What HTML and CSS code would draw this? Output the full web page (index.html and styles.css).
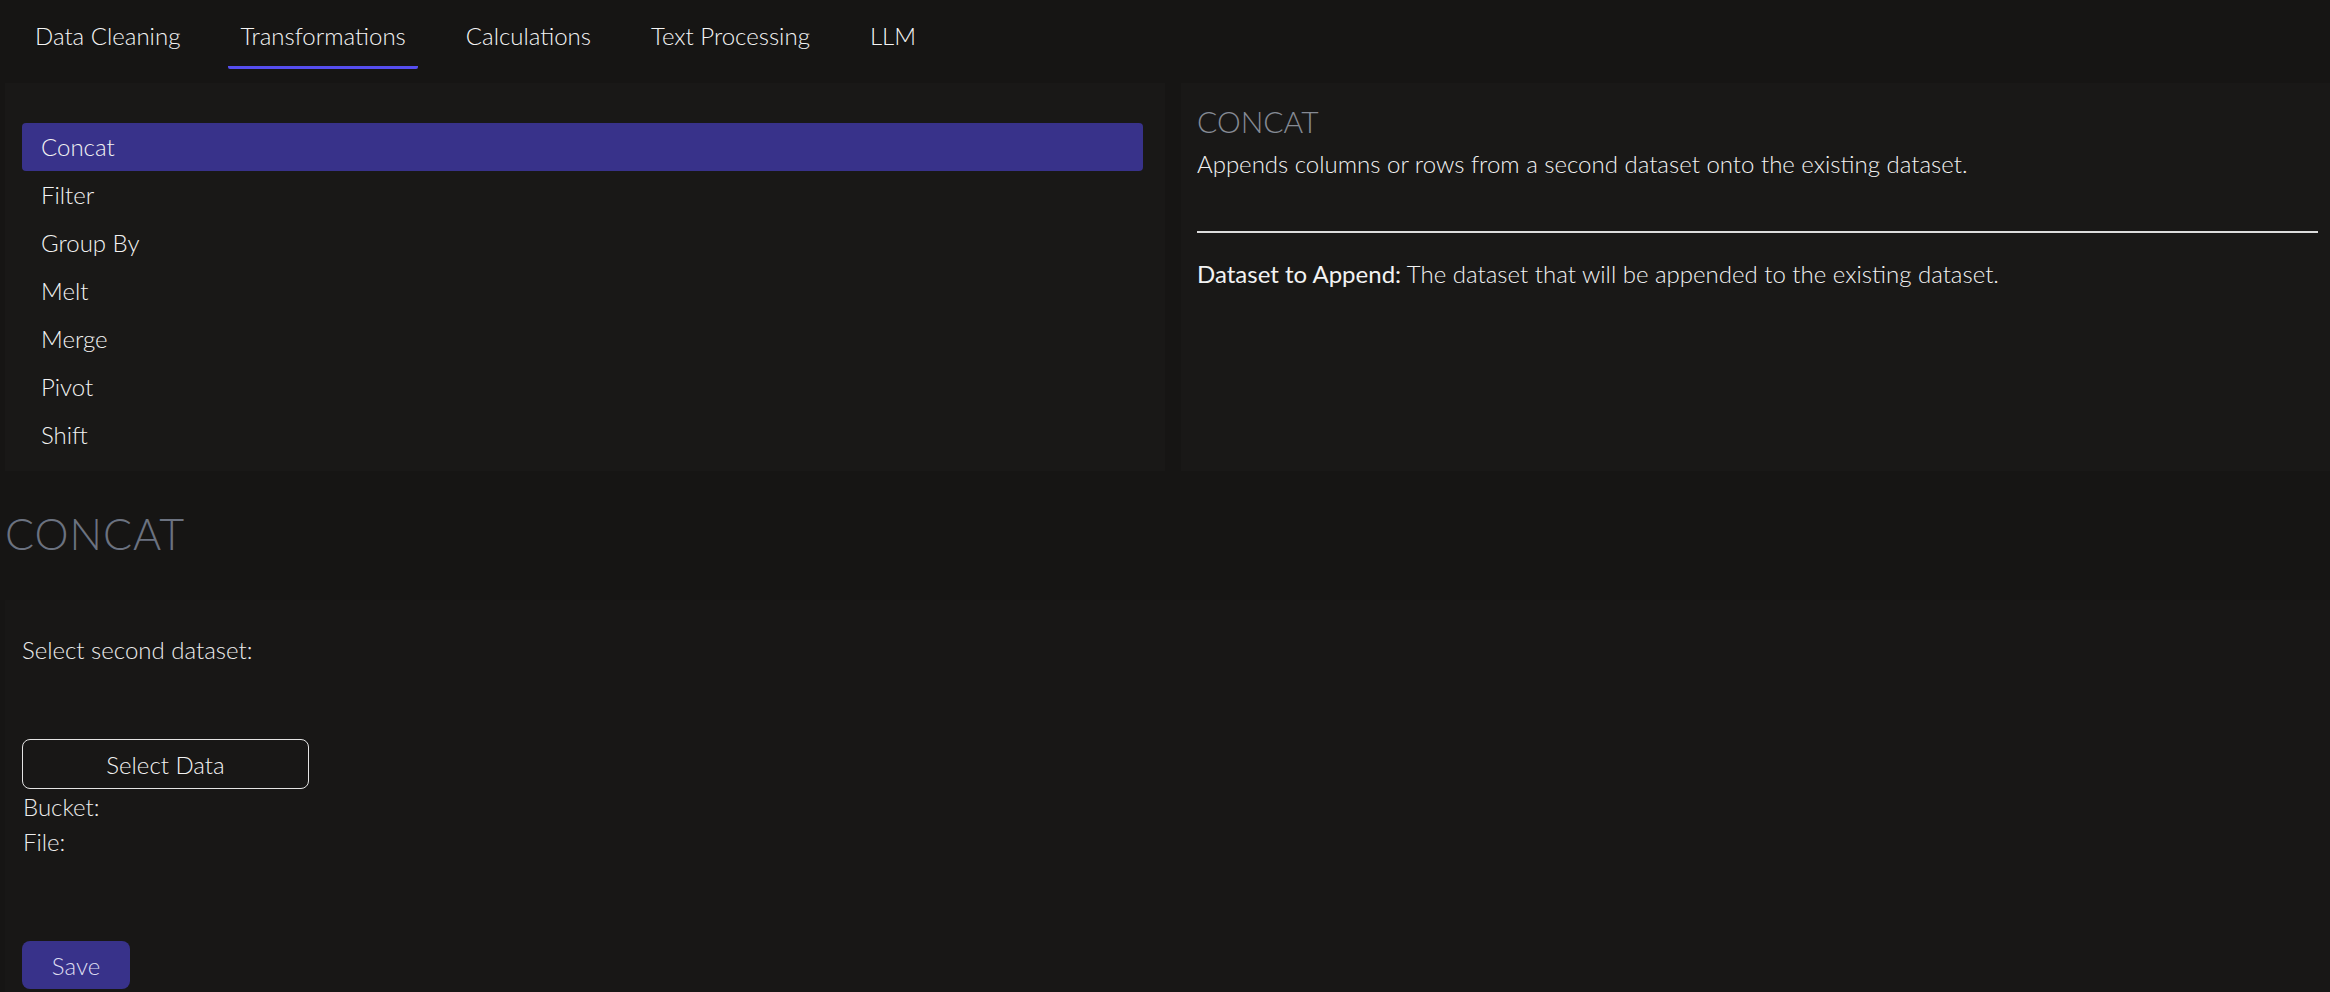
FILE: index.html
```html
<!DOCTYPE html>
<html>
<head>
  <meta charset="UTF-8">
  <meta name="viewport" content="width=device-width, initial-scale=1.0">
  <title>Transformations</title>
  <link rel="stylesheet" href="styles.css">
</head>
<body>
  <nav class="tabs">
    <a class="tab">Data Cleaning</a>
    <a class="tab active">Transformations</a>
    <a class="tab">Calculations</a>
    <a class="tab">Text Processing</a>
    <a class="tab">LLM</a>
  </nav>

  <main class="main">
    <section class="panels">
      <div class="panel list-panel">
        <ul class="ops">
          <li class="selected">Concat</li>
          <li>Filter</li>
          <li>Group By</li>
          <li>Melt</li>
          <li>Merge</li>
          <li>Pivot</li>
          <li>Shift</li>
        </ul>
      </div>

      <div class="panel info-panel">
        <h2 class="info-title">CONCAT</h2>
        <p class="info-desc">Appends columns or rows from a second dataset onto the existing dataset.</p>
        <hr>
        <p class="info-param"><span class="param-name">Dataset to Append:</span> The dataset that will be appended to the existing dataset.</p>
      </div>
    </section>

    <h1 class="op-title">CONCAT</h1>

    <section class="form-card">
      <label class="field-label">Select second dataset:</label>
      <button class="outline-btn">Select Data</button>
      <div class="meta">Bucket:</div>
      <div class="meta">File:</div>
      <button class="save-btn">Save</button>
    </section>
  </main>
</body>
</html>
```

FILE: styles.css
```css
body {
  margin: 0;
  background: #161514;
  color: #ececec;
  font-family: Lato, "Liberation Sans", sans-serif;
  font-size: 24px;
  line-height: 36px;
  height: 992px;
  overflow: hidden;
}

/* tab bar */
.tabs {
  display: flex;
  gap: 36px;
  padding-left: 23px;
}

.tab {
  padding: 18px 12px 12px;
  font-weight: 300;
  color: #f4f4f4;
  border-bottom: 3px solid transparent;
  cursor: pointer;
}

.tab.active {
  border-bottom-color: #564ef0;
  border-radius: 0 0 2px 2px;
}

.main {
  padding-left: 5px;
  margin-top: 14px;
}

.panels {
  display: grid;
  grid-template-columns: 1160px 1fr;
  gap: 16px;
}

.panel {
  background: #191817;
  box-sizing: border-box;
  height: 388px;
}

.list-panel {
  padding: 40px 22px 12px 17px;
}

.ops {
  list-style: none;
  margin: 0;
  padding: 0;
}

.ops li {
  padding: 6px 19px;
  font-weight: 300;
  border-radius: 4px;
  color: #f2f2f2;
}

.ops li.selected {
  background: #38328a;
}

.info-panel {
  padding: 20px 12px 16px 16px;
}

.info-title {
  margin: 0;
  font-size: 30px;
  line-height: 36px;
  font-weight: 300;
  color: #858a94;
}

.info-desc {
  margin: 7px 0 0;
  font-weight: 300;
  color: #f2f2f2;
}

.info-panel hr {
  margin: 49px 0 0;
  border: none;
  border-top: 2px solid #dcdcdc;
}

.info-param {
  margin: 23px 0 0;
  font-weight: 300;
  color: #f2f2f2;
}

.param-name {
  font-weight: 400;
}

.op-title {
  margin: 37px 0 0;
  font-size: 43px;
  line-height: 52px;
  font-weight: 300;
  letter-spacing: 1px;
  color: #6b7280;
}

.form-card {
  margin-top: 40px;
  padding: 32px 17px 0;
  background: #181716;
  display: flex;
  flex-direction: column;
  align-items: flex-start;
  height: 400px;
}

.field-label {
  font-weight: 300;
}

.outline-btn {
  margin-top: 71px;
  width: 287px;
  height: 50px;
  background: transparent;
  border: 1px solid #e4e4e4;
  border-radius: 8px;
  color: #f2f2f2;
  font-family: inherit;
  font-size: 24px;
  font-weight: 300;
  cursor: pointer;
}

.meta {
  line-height: 35px;
  font-weight: 300;
  margin-left: 1px;
}

.save-btn {
  margin-top: 82px;
  width: 108px;
  height: 48px;
  background: #38328a;
  border: none;
  border-radius: 8px;
  color: #dcdcf0;
  font-family: inherit;
  font-size: 24px;
  font-weight: 300;
  cursor: pointer;
}
```
